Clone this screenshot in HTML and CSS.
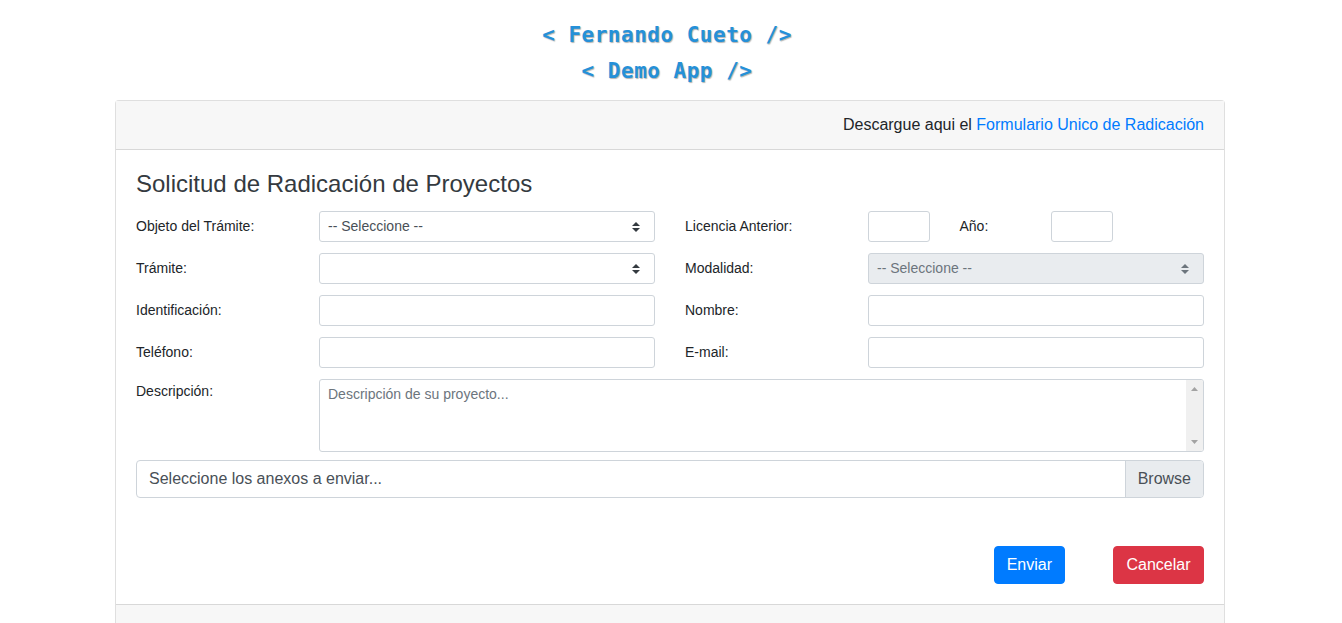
FILE: index.html
```html
<!DOCTYPE html>
<html lang="es">
<head>
<meta charset="utf-8">
<title>Demo App</title>
<link rel="stylesheet" href="styles.css">
</head>
<body>
<header class="brand">
  <div class="brand-line">&lt; Fernando Cueto /&gt;</div>
  <div class="brand-line">&lt; Demo App /&gt;</div>
</header>
<main class="card">
  <div class="card-header">Descargue aqui el <a href="#" class="link">Formulario Unico de Radicación</a></div>
  <div class="card-body">
    <h4 class="title">Solicitud de Radicación de Proyectos</h4>
    <form class="form">
      <div class="row">
        <label class="col-2 lbl">Objeto del Trámite:</label>
        <div class="col-4 sel-wrap">
          <select class="ctl select"><option>-- Seleccione --</option></select>
          <svg class="arrows" viewBox="0 0 4 5" width="8" height="10"><path d="M2 0L0 2h4zm0 5L0 3h4z" fill="#343a40"/></svg>
        </div>
        <label class="col-2 lbl">Licencia Anterior:</label>
        <div class="col-1"><input class="ctl" type="text"></div>
        <label class="col-1 lbl">Año:</label>
        <div class="col-1"><input class="ctl" type="text"></div>
      </div>
      <div class="row">
        <label class="col-2 lbl">Trámite:</label>
        <div class="col-4 sel-wrap">
          <select class="ctl select"><option></option></select>
          <svg class="arrows" viewBox="0 0 4 5" width="8" height="10"><path d="M2 0L0 2h4zm0 5L0 3h4z" fill="#343a40"/></svg>
        </div>
        <label class="col-2 lbl">Modalidad:</label>
        <div class="col-4 sel-wrap">
          <select class="ctl select" disabled><option>-- Seleccione --</option></select>
          <svg class="arrows" viewBox="0 0 4 5" width="8" height="10"><path d="M2 0L0 2h4zm0 5L0 3h4z" fill="#6c757d"/></svg>
        </div>
      </div>
      <div class="row">
        <label class="col-2 lbl">Identificación:</label>
        <div class="col-4"><input class="ctl" type="text"></div>
        <label class="col-2 lbl">Nombre:</label>
        <div class="col-4"><input class="ctl" type="text"></div>
      </div>
      <div class="row">
        <label class="col-2 lbl">Teléfono:</label>
        <div class="col-4"><input class="ctl" type="text"></div>
        <label class="col-2 lbl">E-mail:</label>
        <div class="col-4"><input class="ctl" type="text"></div>
      </div>
      <div class="row row-top">
        <label class="col-2 lbl lbl-top">Descripción:</label>
        <div class="col-10 area-wrap">
          <textarea class="ctl area" placeholder="Descripción de su proyecto..."></textarea>
          <div class="fake-scroll">
            <svg width="7" height="4" viewBox="0 0 7 4"><path d="M3.5 0L7 4H0z" fill="#a3a3a3"/></svg>
            <svg width="7" height="4" viewBox="0 0 7 4"><path d="M0 0h7L3.5 4z" fill="#a3a3a3"/></svg>
          </div>
        </div>
      </div>
      <div class="file">
        <span class="file-text">Seleccione los anexos a enviar...</span>
        <span class="file-btn">Browse</span>
      </div>
      <div class="actions">
        <button type="button" class="btn btn-primary">Enviar</button>
        <button type="button" class="btn btn-danger">Cancelar</button>
      </div>
    </form>
  </div>
  <div class="card-footer"></div>
</main>
</body>
</html>
```
FILE: styles.css
```css
* { box-sizing: border-box; }
html, body { margin: 0; padding: 0; }
body {
  background: #fff;
  font-family: "Liberation Sans", Arial, sans-serif;
  font-size: 16px;
  line-height: 1.5;
  color: #212529;
}
.brand {
  padding: 17px 8px 0 0;
  text-align: center;
}
.brand-line {
  font-family: "DejaVu Sans Mono", "Liberation Mono", monospace;
  font-weight: bold;
  font-size: 21px;
  letter-spacing: 0.5px;
  line-height: 36px;
  color: #2590d8;
  text-shadow: 1px 1px 1px rgba(0,0,0,0.3);
}
.card {
  width: 1110px;
  margin: 11px 0 0 calc(50% - 556px);
  border: 1px solid rgba(0,0,0,.125);
  border-radius: 4px;
  background: #fff;
}
.card-header {
  padding: 12px 20px;
  line-height: 24px;
  background: #f7f7f7;
  border-bottom: 1px solid rgba(0,0,0,.125);
  text-align: right;
  color: #212529;
}
.link { color: #007bff; text-decoration: none; }
.card-body { padding: 20px; }
.title {
  margin: 0 0 12px;
  font-size: 24px;
  font-weight: 500;
  line-height: 1.2;
  color: #343a40;
}
.form { display: flex; flex-direction: column; }
.row {
  display: flex;
  margin: 0 -15px 11px;
  align-items: center;
}
.row-top { align-items: flex-start; margin-bottom: 8px; }
.col-1, .col-2, .col-4, .col-10 { padding: 0 15px; }
.col-1 { width: 91.5px; }
.col-2 { width: 183px; }
.col-4 { width: 366px; }
.col-10 { width: 915px; }
.lbl { font-size: 14px; line-height: 21px; margin: 0; }
.lbl-top { padding-top: 2px; }
.ctl {
  display: block;
  width: 100%;
  height: 31px;
  padding: 4px 8px;
  font-family: "Liberation Sans", Arial, sans-serif;
  font-size: 14px;
  line-height: 21px;
  color: #495057;
  background: #fff;
  border: 1px solid #ced4da;
  border-radius: 3px;
  outline: none;
}
.sel-wrap { position: relative; }
.select {
  appearance: none;
  -webkit-appearance: none;
  padding-right: 28px;
}
.select:disabled { background: #e9ecef; color: #6c757d; opacity: 1; }
.arrows {
  position: absolute;
  right: 30px;
  top: 11px;
}
.area-wrap { position: relative; }
.area {
  height: 73px;
  resize: none;
  overflow: hidden;
  padding-right: 26px;
}
.area::placeholder { color: #6c757d; opacity: 1; }
.fake-scroll {
  position: absolute;
  top: 1px;
  bottom: 1px;
  right: 16px;
  width: 17px;
  background: #f0f0f0;
  border-radius: 0 2px 2px 0;
  display: flex;
  flex-direction: column;
  justify-content: space-between;
  align-items: center;
  padding: 7px 0 7px;
}
.fake-scroll svg { display: block; }
.file {
  display: flex;
  height: 38px;
  border: 1px solid #ced4da;
  border-radius: 4px;
  overflow: hidden;
}
.file-text {
  flex: 1;
  padding: 6px 12px;
  line-height: 24px;
  color: #495057;
}
.file-btn {
  padding: 6px 12px;
  line-height: 24px;
  color: #495057;
  background: #e9ecef;
  border-left: 1px solid #ced4da;
}
.actions {
  display: flex;
  justify-content: flex-end;
  gap: 48px;
  margin-top: 48px;
}
.btn {
  font-family: "Liberation Sans", Arial, sans-serif;
  font-size: 16px;
  line-height: 24px;
  padding: 6px 12px;
  border: 1px solid transparent;
  border-radius: 4px;
  color: #fff;
  cursor: pointer;
}
.btn-primary { background: #007bff; border-color: #007bff; }
.btn-danger { background: #dc3545; border-color: #dc3545; min-width: 91px; }
.card-footer {
  height: 40px;
  background: #f7f7f7;
  border-top: 1px solid rgba(0,0,0,.125);
}
```
